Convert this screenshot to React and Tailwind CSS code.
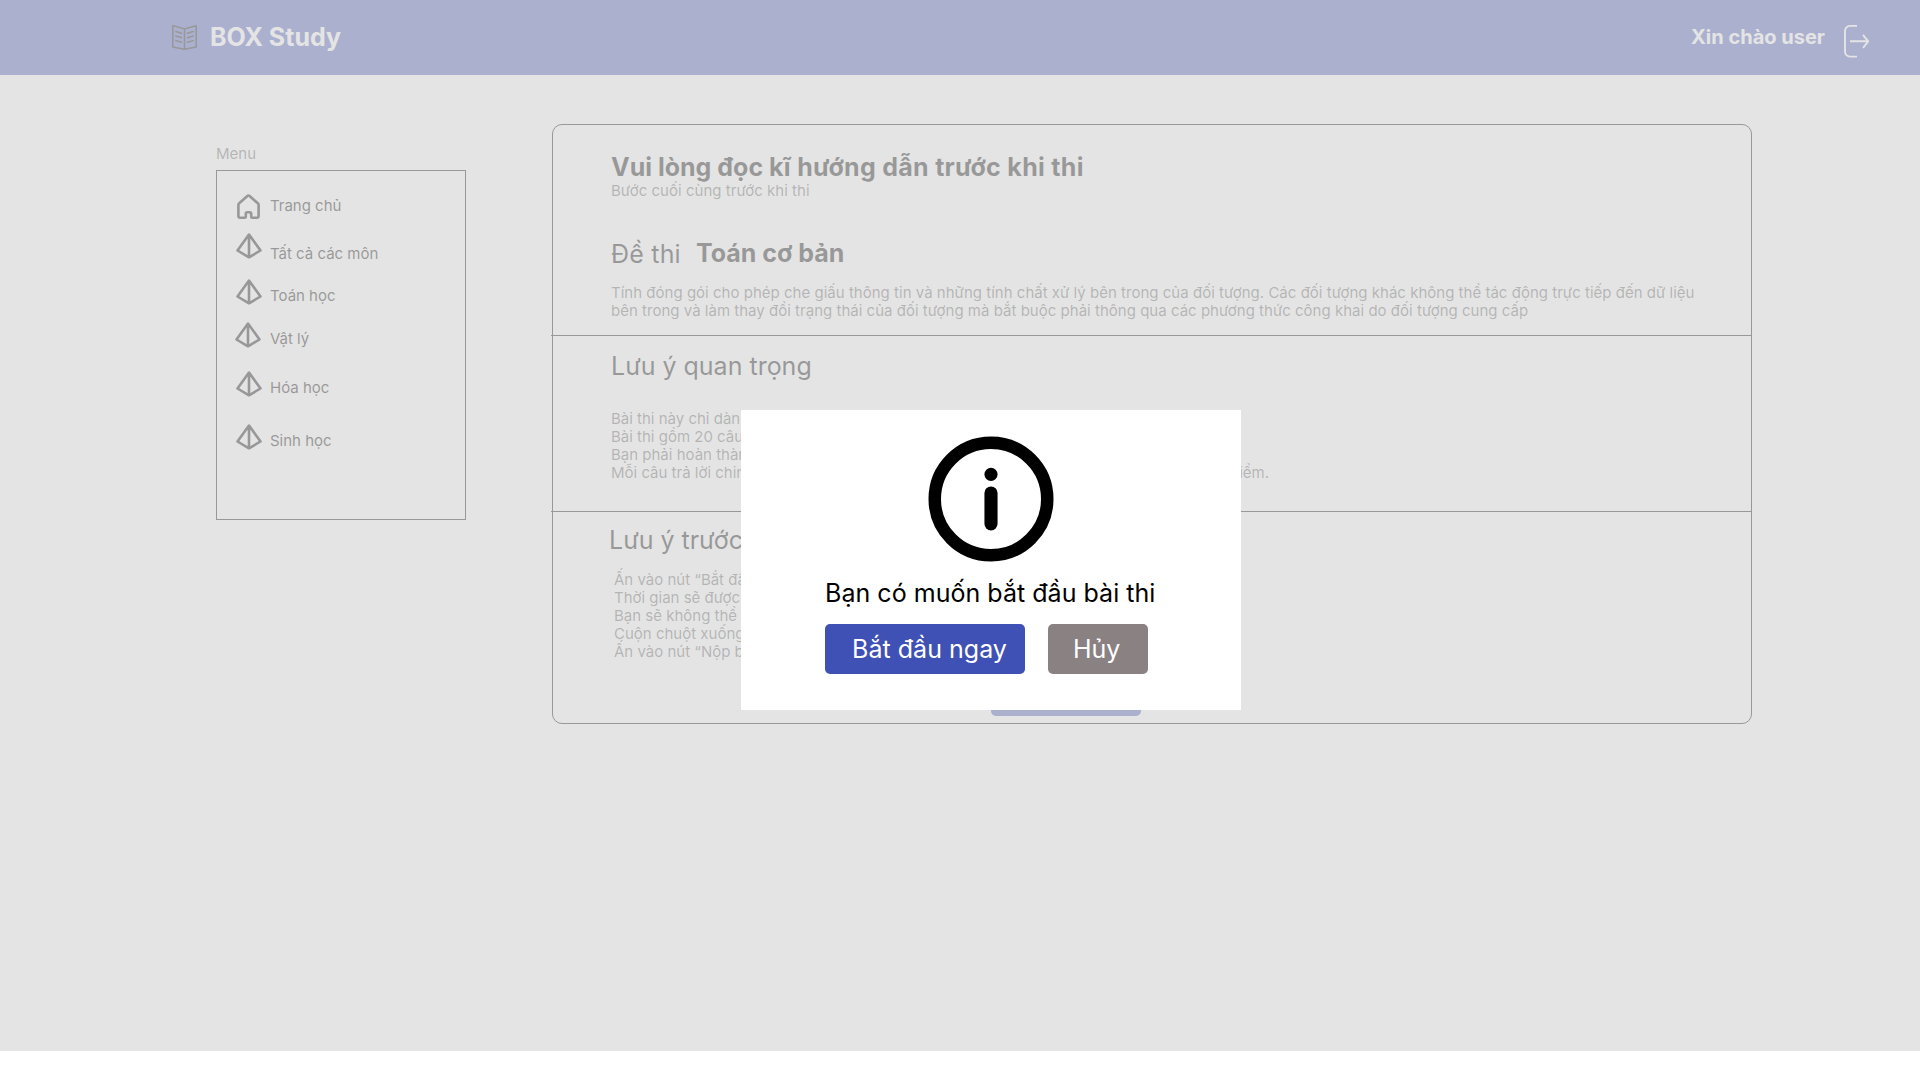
import React from "react";

const BookIcon = () => (
  <svg className="mt-[25px] h-[25px] w-[25px] shrink-0" viewBox="0 0 25 25" fill="none" stroke="#000" strokeWidth="1.5" strokeLinejoin="round" strokeLinecap="round">
    <path d="M.8.8v21.1l11.7 2.4 11.7-2.4V.8L12.5 3.9.8.8ZM12.5 3.9v20.2" />
    <path d="m3.8 6.5 5.7 1.7M3.8 11l5.7 1.7M3.8 15.6l5.7 1.7M21.2 6.5l-5.7 1.7M21.2 11l-5.7 1.7M21.2 15.6l-5.7 1.7" />
  </svg>
);

const LogoutIcon = () => (
  <svg className="mt-6 h-[35px] w-[27px] shrink-0" viewBox="0 0 27 35" fill="none" stroke="#fff" strokeWidth="1.9" strokeLinejoin="round">
    <path d="M15 1.9H8a5 5 0 0 0-5 5v20.7a5 5 0 0 0 5 5h7M8 17.3h18M21 10.8l5.2 6.5-5.2 6.5" />
  </svg>
);

const HomeIcon = () => (
  <svg className="h-[26px] w-[26px] shrink-0" viewBox="0 0 26 26" fill="none" stroke="#000" strokeWidth="2.6" strokeLinejoin="round">
    <path d="M2.4 11q0-1 .8-1.7L11.4 2q1.1-1 2.2 0l8.2 7.3q.8.7.8 1.7v11q0 1.7-1.7 1.7h-4.5q-1.2 0-1.2-1.2v-2.8q0-1.5-1.5-1.5h-2.4q-1.5 0-1.5 1.5v2.8q0 1.2-1.2 1.2H4.1q-1.7 0-1.7-1.7Z" />
  </svg>
);

const PyramidIcon = () => (
  <svg className="h-[26px] w-[26px] shrink-0" viewBox="0 0 26 26" fill="none" stroke="#000" strokeWidth="2.6" strokeLinejoin="round">
    <path d="M13 1.5 1.5 17.5 13 24.3l11.5-6.8L13 1.5ZM13 1.5v22.8" />
  </svg>
);

const InfoIcon = () => (
  <svg className="h-[150px] w-[150px]" viewBox="0 0 24 24">
    <circle cx="12" cy="12" r="9" fill="none" stroke="#000" strokeWidth="2" />
    <circle cx="12" cy="8.05" r="1.05" />
    <rect x="10.95" y="9.98" width="2.1" height="7.04" rx="1.05" />
  </svg>
);

const menu = [
  { label: "Trang chủ", Icon: HomeIcon, row: "h-[39px]", text: "mt-[3px] ml-2" },
  { label: "Tất cả các môn", Icon: PyramidIcon, row: "h-[46px]", text: "mt-3 ml-2" },
  { label: "Toán học", Icon: PyramidIcon, row: "h-[43px]", text: "mt-2 ml-2" },
  { label: "Vật lý", Icon: PyramidIcon, row: "h-[49px] -ml-px", text: "mt-2 ml-[9px]" },
  { label: "Hóa học", Icon: PyramidIcon, row: "h-[53px]", text: "mt-2 ml-2" },
  { label: "Sinh học", Icon: PyramidIcon, row: "h-[26px]", text: "mt-2 ml-2" },
];

const Header = () => (
  <header className="flex h-[75px] items-start bg-[#3f51b5] pl-[172px] pr-[51px] text-white">
    <BookIcon />
    <span className="ml-[13px] mt-[22px] text-[25px] font-bold leading-[30px]">BOX Study</span>
    <span className="ml-auto mt-[25px] text-[20px] font-bold leading-6">Xin chào user</span>
    <span className="ml-[17px]">
      <LogoutIcon />
    </span>
  </header>
);

const Sidebar = () => (
  <aside className="mt-[70px] w-[250px]">
    <p className="h-[25px] text-[15px] leading-[18px] text-black/65">Menu</p>
    <nav className="h-[350px] border border-black pl-[19px] pt-[23px]">
      {menu.map(({ label, Icon, row, text }) => (
        <div key={label} className={"flex items-start " + row}>
          <Icon />
          <span className={"text-[15px] leading-[18px] tracking-[-0.01px] " + text}>{label}</span>
        </div>
      ))}
    </nav>
  </aside>
);

const Guide = () => (
  <main className="ml-[86px] mt-[49px] h-[600px] w-[1200px] rounded-[10px] border border-black">
    <section className="-ml-0.5 h-[211px] border-b border-black pl-[60px] pt-[27px]">
      <h1 className="text-[25px] font-bold leading-[30px]">
        Vui lòng đọc <span className="tracking-[0.3px]">kĩ hướng dẫn trước khi thi</span>
      </h1>
      <p className="text-[15px] leading-[18px] tracking-[0.03px] text-black/65">Bước cuối cùng trước khi thi</p>
      <div className="mt-[38px] flex text-[25px] leading-[30px]">
        <span className="mt-px w-[85px] tracking-[0.2px]">Đề thi</span>
        <span className="font-bold">Toán cơ bản</span>
      </div>
      <p className="mt-[15px] whitespace-nowrap text-[15px] leading-[18px] tracking-[0.017px] text-black/65">
        Tính đóng gói cho phép che giấu thông tin và những tính chất xử lý bên trong của đối tượng. Các đối tượng khác không thể tác động trực tiếp đến dữ liệu
        <br />
        bên trong và làm thay đổi trạng thái của đối tượng mà bắt buộc phải thông qua các phương thức công khai do đối tượng cung cấp
      </p>
    </section>
    <section className="-ml-0.5 h-[176px] border-b border-black pl-[60px] pt-[15px]">
      <h2 className="text-[25px] leading-[30px]">Lưu ý quan trọng</h2>
      <div className="mt-[29px] w-[658px] text-[15px] leading-[18px] text-black/65">
        <p>Bài thi này chỉ dành</p>
        <p>Bài thi gồm 20 câu</p>
        <p>Bạn phải hoàn thành</p>
        <p className="flex justify-between">
          <span>Mỗi câu trả lời chinh</span>
          <span>điểm.</span>
        </p>
      </div>
    </section>
    <section className="pl-[56px] pt-[13px]">
      <h2 className="text-[25px] leading-[30px]">Lưu ý trước</h2>
      <div className="ml-[5px] mt-4 text-[15px] leading-[18px] text-black/65">
        <p>Ấn vào nút “Bắt đầu</p>
        <p>Thời gian sẽ được</p>
        <p>Bạn sẽ không thể</p>
        <p>Cuộn chuột xuống</p>
        <p>Ấn vào nút “Nộp bài</p>
      </div>
      <div className="ml-[382px] mt-[5px] h-[50px] w-[150px] rounded-[5px] bg-[#3f51b5]" />
    </section>
  </main>
);

const Dialog = () => (
  <div role="dialog" className="absolute left-[741px] top-[410px] flex h-[300px] w-[500px] flex-col bg-white pl-[84px] pt-[14px]">
    <div className="ml-[91px]">
      <InfoIcon />
    </div>
    <p className="mt-1 whitespace-nowrap text-[25px] leading-[30px] tracking-[0.03px]">Bạn có muốn bắt đầu bài thi</p>
    <div className="mt-4 flex gap-[23px] text-[25px] leading-[30px] text-white">
      <button className="h-[50px] w-[200px] whitespace-nowrap rounded-[5px] bg-[#3f51b5] pl-[27px] text-left tracking-[0.03px]">Bắt đầu ngay</button>
      <button className="h-[50px] w-[100px] rounded-[5px] bg-[#8a8282] pl-[25px] text-left">Hủy</button>
    </div>
  </div>
);

export default function App() {
  return (
    <div className="relative h-[1080px] w-[1920px] overflow-hidden bg-white font-['Inter',sans-serif] text-black">
      <Header />
      <div className="flex items-start pl-[216px]">
        <Sidebar />
        <Guide />
      </div>
      <div className="absolute left-0 top-0 h-[1051px] w-full bg-[#d9d9d9]/70" />
      <Dialog />
    </div>
  );
}
